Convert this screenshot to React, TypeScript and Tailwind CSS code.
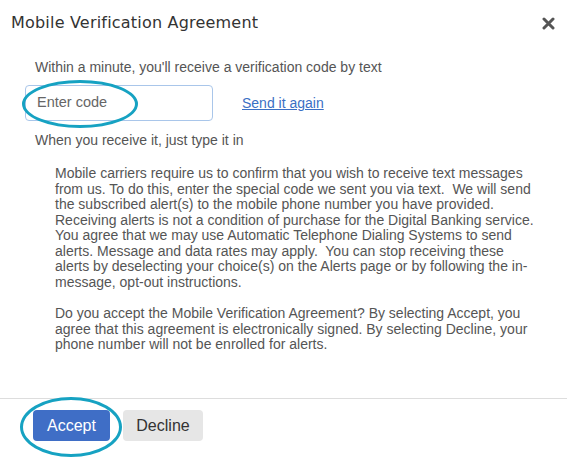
import React from "react";

const para1 = [
  "Mobile carriers require us to confirm that you wish to receive text messages",
  "from us. To do this, enter the special code we sent you via text.  We will send",
  "the subscribed alert(s) to the mobile phone number you have provided.",
  "Receiving alerts is not a condition of purchase for the Digital Banking service.",
  "You agree that we may use Automatic Telephone Dialing Systems to send",
  "alerts. Message and data rates may apply.  You can stop receiving these",
  "alerts by deselecting your choice(s) on the Alerts page or by following the in-",
  "message, opt-out instructions.",
];
const para2 = [
  "Do you accept the Mobile Verification Agreement? By selecting Accept, you",
  "agree that this agreement is electronically signed. By selecting Decline, your",
  "phone number will not be enrolled for alerts.",
];

export default function App() {
  return (
    <div
      className="relative w-[567px] h-[458px] bg-white overflow-hidden flex flex-col"
      style={{ fontFamily: '"Liberation Sans", Arial, sans-serif' }}
    >
      {/* Header */}
      <div className="flex items-center justify-between h-[44px] pt-[2px] pl-[11px] pr-[12px]">
        <h1
          className="text-[16px] text-[#333333] tracking-[0.2px]"
          style={{ fontFamily: '"DejaVu Sans", sans-serif' }}
        >
          Mobile Verification Agreement
        </h1>
        <svg width="13" height="13" viewBox="0 0 13 13">
          <path d="M2 2 L11 11 M11 2 L2 11" stroke="#555" strokeWidth="3" strokeLinecap="round" />
        </svg>
      </div>

      {/* Body */}
      <div className="flex flex-col pl-[35px] text-[14px] text-[#555555]">
        <p className="mt-[15px] leading-[17px]">Within a minute, you'll receive a verification code by text</p>
        <div className="flex items-center mt-[9px] -ml-[10px]">
          <div className="w-[188px] h-[36px] border border-[#a9c6ea] rounded-[4px] flex items-center pl-[11px] text-[#666666] text-[14.5px]">
            Enter code
          </div>
          <a href="#" className="ml-[29px] text-[#3a6fc4] underline">
            Send it again
          </a>
        </div>
        <p className="mt-[11px] leading-[17px]">When you receive it, just type it in</p>

        <div className="mt-[17px] ml-[20px] text-[#555555] leading-[15.5px]">
          {para1.map((l, i) => (
            <div key={i} className="whitespace-pre">{l}</div>
          ))}
          <div className="h-[16px]" />
          {para2.map((l, i) => (
            <div key={i} className="whitespace-pre">{l}</div>
          ))}
        </div>
      </div>

      <div className="flex-1" />

      {/* Footer */}
      <div className="border-t border-[#dddddd] h-[60px] flex items-start pt-[11px] pl-[33px] gap-[13px]">
        <button className="w-[77px] h-[31px] rounded-[4px] bg-[#3f6ec6] text-white text-[16px]">
          Accept
        </button>
        <button className="w-[80px] h-[31px] rounded-[4px] bg-[#e6e6e6] text-[#333333] text-[16px]">
          Decline
        </button>
      </div>

      {/* Highlight ellipses */}
      <div className="absolute left-[22px] top-[80px] w-[116px] h-[48px] rounded-[50%] border-[3px] border-[#16a2c2] pointer-events-none" />
      <div className="absolute left-[20px] top-[397px] w-[102px] h-[60px] rounded-[50%] border-[3px] border-[#16a2c2] pointer-events-none" />
    </div>
  );
}
